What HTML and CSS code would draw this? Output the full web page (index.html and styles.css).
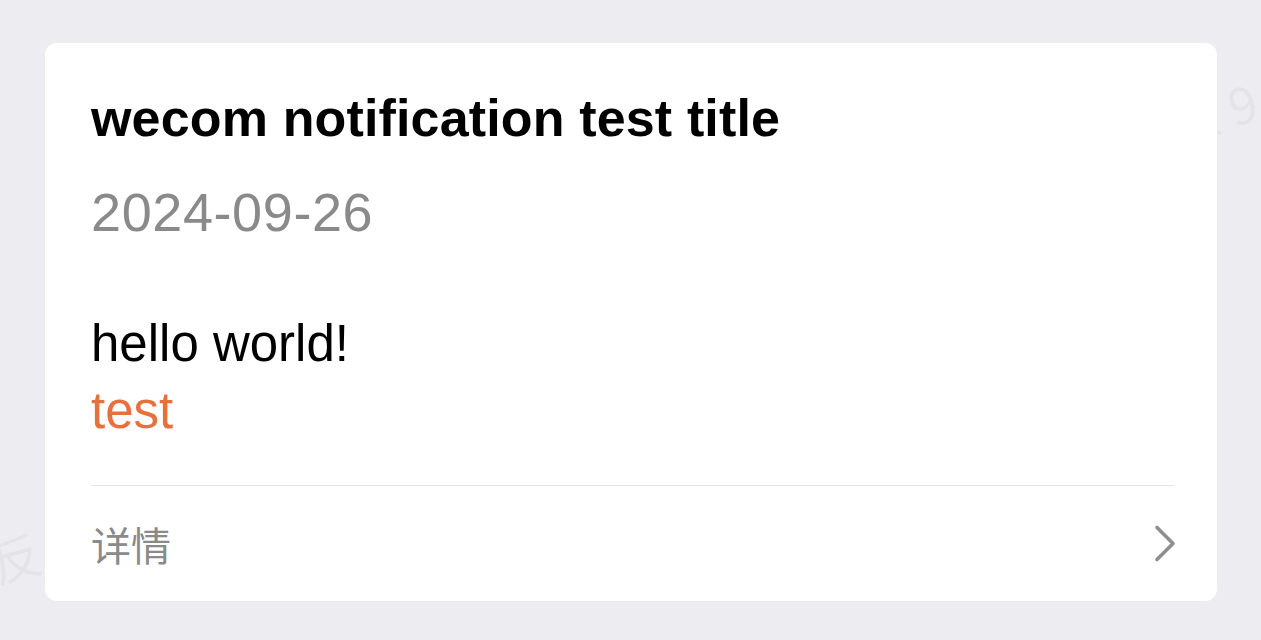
FILE: index.html
```html
<!DOCTYPE html>
<html lang="zh">
<head>
<meta charset="utf-8">
<title>wecom notification</title>
<link rel="stylesheet" href="styles.css">
</head>
<body>
<div class="watermark wm-right">版 9</div>
<div class="watermark wm-left">反 9</div>
<main class="card">
  <h1 class="title">wecom notification test title</h1>
  <div class="date">2024-09-26</div>
  <div class="content">
    <div class="line">hello world!</div>
    <div class="line accent">test</div>
  </div>
  <div class="divider"></div>
  <div class="footer">
    <span class="detail">详情</span>
    <svg class="chevron" width="24" height="40" viewBox="0 0 24 40" aria-hidden="true">
      <polyline points="4,3.5 20,19.5 4,35.5" fill="none" stroke="#8e8e8e" stroke-width="3.6" stroke-linecap="round" stroke-linejoin="round"/>
    </svg>
  </div>
</main>
</body>
</html>
```
FILE: styles.css
```css
html, body {
  margin: 0;
  padding: 0;
}
body {
  background: #ededf1;
  width: 1261px;
  height: 640px;
  overflow: hidden;
  position: relative;
  font-family: "Liberation Sans", Arial, "Noto Sans CJK SC", sans-serif;
  padding: 43px 44px 0 45px;
  box-sizing: border-box;
}
.watermark {
  position: absolute;
  color: rgba(0, 0, 0, 0.035);
  font-size: 50px;
  font-family: "Noto Sans CJK SC", sans-serif;
  transform: rotate(-15deg);
  white-space: nowrap;
  z-index: 0;
}
.wm-right { left: 1168px; top: 74px; }
.wm-left { left: -10px; top: 515px; }
.card {
  position: relative;
  z-index: 1;
  background: #ffffff;
  border-radius: 12px;
  height: 558px;
  box-sizing: border-box;
  padding: 45px 43px 0 46px;
  display: flex;
  flex-direction: column;
}
.title {
  margin: 0;
  font-size: 52px;
  line-height: 60px;
  font-weight: 700;
  color: #000;
  letter-spacing: 0.15px;
}
.date {
  margin-top: 34px;
  font-size: 54px;
  line-height: 60px;
  color: #8a8a8a;
  letter-spacing: 0.6px;
}
.content {
  margin-top: 68px;
}
.line {
  font-size: 51px;
  line-height: 67px;
  color: #000;
}
.accent {
  color: #e8703a;
}
.divider {
  margin-top: 41px;
  height: 1px;
  background: #e6e6e8;
}
.footer {
  flex: 1;
  display: flex;
  align-items: center;
  justify-content: space-between;
}
.detail {
  font-family: "Noto Sans CJK SC", sans-serif;
  font-size: 40px;
  color: #8a8a8a;
  line-height: 1;
}
.chevron {
  margin-right: -3px;
  display: block;
}
```
